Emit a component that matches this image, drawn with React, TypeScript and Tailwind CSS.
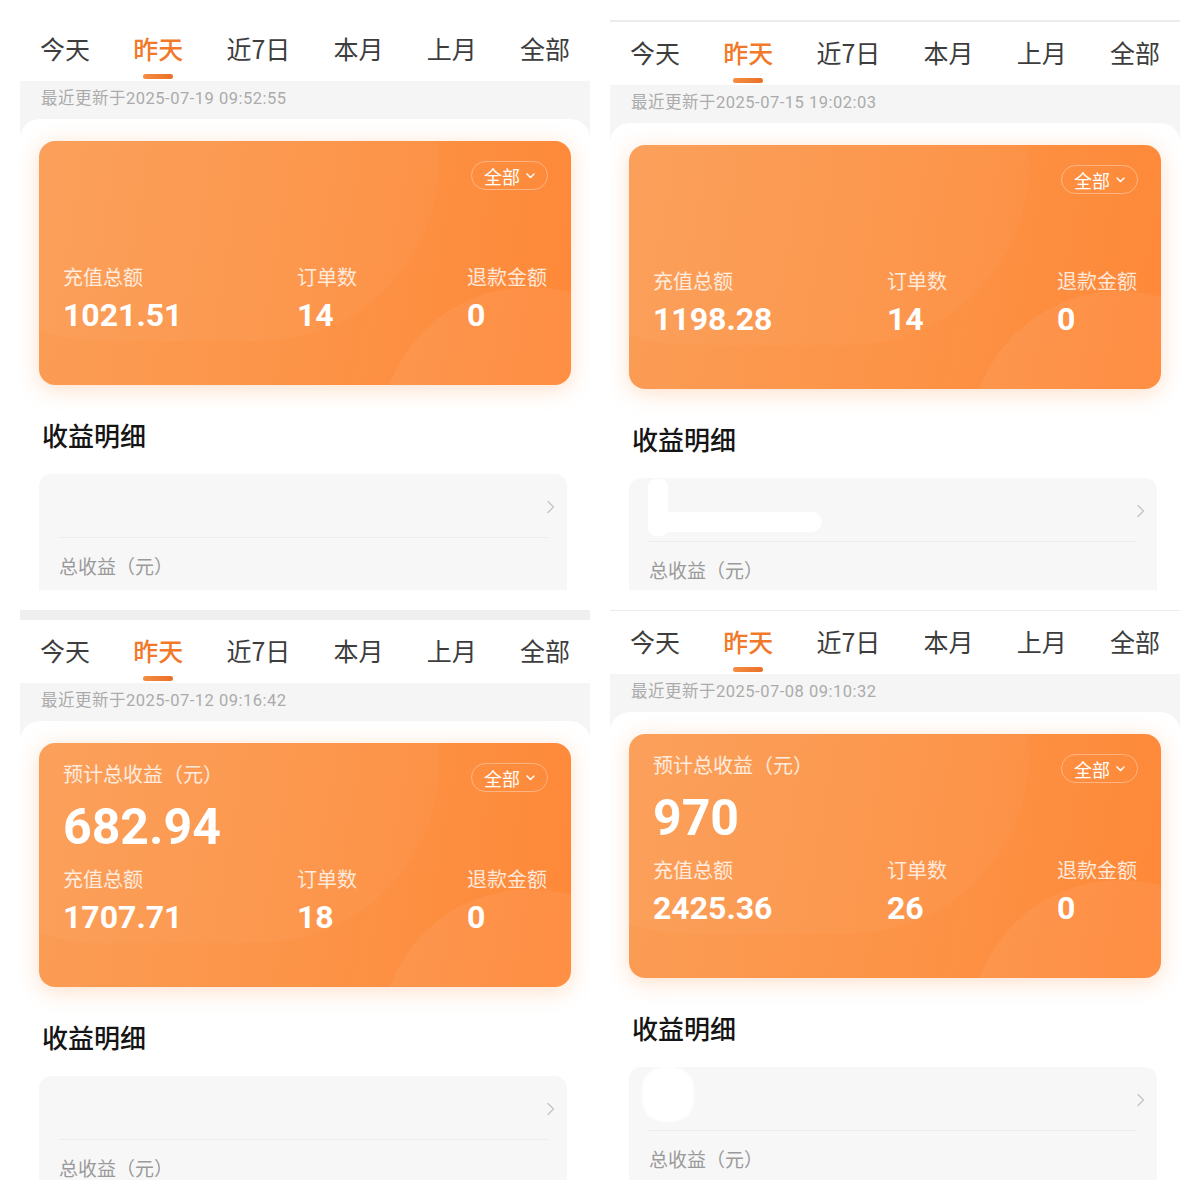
import React from "react";

type PanelData = {
  top: "space" | "line2" | "bar" | "line1";
  ts: string;
  est?: string;
  recharge: string;
  orders: string;
  refund: string;
  blot?: "a" | "b";
  h: string;
};

const panels: PanelData[] = [
  { top: "space", ts: "2025-07-19 09:52:55", recharge: "1021.51", orders: "14", refund: "0", h: "h-[590px]" },
  { top: "line2", ts: "2025-07-15 19:02:03", recharge: "1198.28", orders: "14", refund: "0", blot: "a", h: "h-[590px]" },
  { top: "bar", ts: "2025-07-12 09:16:42", est: "682.94", recharge: "1707.71", orders: "18", refund: "0", h: "h-[570px]" },
  { top: "line1", ts: "2025-07-08 09:10:32", est: "970", recharge: "2425.36", orders: "26", refund: "0", blot: "b", h: "h-[570px]" },
];

const CJK = "font-['Noto_Sans_CJK_SC','Noto_Sans',sans-serif]";
const NUM = "font-['Roboto','Noto_Sans_CJK_SC',sans-serif]";

const tabs = ["今天", "昨天", "近7日", "本月", "上月", "全部"];

function TopDecor({ top }: { top: PanelData["top"] }) {
  if (top === "space") return <div className="h-[18px]" />;
  if (top === "line2")
    return (
      <>
        <div className="h-[20px]" />
        <div className="h-[2px] bg-[#ececec]" />
      </>
    );
  if (top === "bar") return <div className="h-[10px] bg-[#efefef]" />;
  return <div className="h-px bg-[#ececec]" />;
}

function Tabs() {
  return (
    <div className={`relative flex h-[63px] items-start justify-between px-[20px] ${CJK}`}>
      {tabs.map((t, i) => (
        <div key={t} className="relative flex h-[63px] flex-col items-center">
          <span
            className={`mt-[16px] text-[25px] leading-[28px] ${
              i === 1 ? "font-medium text-[#f07a2a]" : "text-[#3d3d3d]"
            }`}
          >
            {t}
          </span>
          {i === 1 && (
            <div className="absolute top-[56px] h-[5px] w-[30px] rounded-full bg-[linear-gradient(90deg,#f48d43,#ea7026)]" />
          )}
        </div>
      ))}
    </div>
  );
}

function Chevron() {
  return (
    <svg width="10" height="14" viewBox="0 0 10 14" fill="none">
      <path d="M2 1.5l5.5 5.5L2 12.5" stroke="#c4c4c4" strokeWidth="1.3" strokeLinecap="round" strokeLinejoin="round" />
    </svg>
  );
}

function OrangeCard({ p }: { p: PanelData }) {
  return (
    <div className="relative h-[244px] overflow-hidden rounded-[16px] bg-[linear-gradient(100deg,#fb9d56_0%,#fc9448_50%,#fe8838_100%)] px-[24px] pt-[17px] shadow-[0_4px_22px_rgba(255,140,60,0.28)]">
      <div className="absolute left-[341px] top-[146px] h-[300px] w-[300px] rounded-full bg-white/[0.06]" />
      <div className="absolute -left-[120px] -top-[160px] h-[360px] w-[520px] rounded-full bg-white/[0.03]" />
      <div className="relative flex h-[28px] items-start justify-between">
        <span className={`text-[20px] leading-[28px] text-white/80 ${CJK}`}>
          {p.est ? "预计总收益（元）" : ""}
        </span>
        <div
          className={`mt-[3px] -mr-px flex h-[29px] w-[77px] items-center justify-center gap-[6px] rounded-full border border-white/35 ${CJK}`}
        >
          <span className="text-[18px] leading-none text-white">全部</span>
          <svg width="9" height="6" viewBox="0 0 9 6" fill="none">
            <path d="M1 1l3.5 3.5L8 1" stroke="#fff" strokeWidth="1.5" strokeLinecap="round" strokeLinejoin="round" />
          </svg>
        </div>
      </div>
      <div className={`relative mt-[11px] h-[56px] text-[50px] font-bold leading-[56px] text-white ${NUM}`}>
        {p.est ?? ""}
      </div>
      <div className="relative mt-[10px] grid grid-cols-[234px_1fr_auto]">
        {[
          ["充值总额", p.recharge],
          ["订单数", p.orders],
          ["退款金额", p.refund],
        ].map(([label, val]) => (
          <div key={label} className="flex flex-col">
            <span className={`text-[20px] leading-[28px] text-white/80 ${CJK}`}>{label}</span>
            <span className={`mt-[6px] text-[32px] font-bold leading-[36px] text-white ${NUM}`}>{val}</span>
          </div>
        ))}
      </div>
    </div>
  );
}

function DetailCard({ blot }: { blot?: "a" | "b" }) {
  return (
    <div className="relative mr-[4px] mt-[21px] h-[160px] rounded-[12px] bg-[#f7f7f7]">
      <div className="flex h-[63px] items-center justify-end pr-[11px] pt-[3px]">
        <Chevron />
      </div>
      <div className="mx-[20px] h-px bg-[#ebebeb]" />
      <div className={`flex h-[57px] items-center pl-[20px] text-[19px] text-[#9a9a9a] ${CJK}`}>
        总收益（元）
      </div>
      {blot === "a" && (
        <>
          <div className="absolute left-[19px] top-px h-[57px] w-[20px] rounded-[8px] bg-white" />
          <div className="absolute left-[19px] top-[34px] h-[20px] w-[174px] rounded-full bg-white" />
        </>
      )}
      {blot === "b" && (
        <div className="absolute left-[13px] top-0 h-[55px] w-[52px] rounded-[22px] bg-white blur-[1px]" />
      )}
    </div>
  );
}

function Panel({ p }: { p: PanelData }) {
  return (
    <div className={`${p.h} overflow-hidden bg-white`}>
      <TopDecor top={p.top} />
      <Tabs />
      <div className="bg-[#f5f5f5]">
        <div
          className={`h-[38px] pl-[21px] pt-[8px] text-[16.5px] leading-[20px] tracking-[0.5px] text-[#ababab] ${NUM}`}
        >
          最近更新于{p.ts}
        </div>
        <div className="rounded-t-[20px] bg-white px-[19px] pb-[40px] pt-[22px]">
          <OrangeCard p={p} />
          <div
            className={`mt-[32px] pl-[3px] text-[26px] font-medium leading-[36px] text-[#151515] ${CJK}`}
          >
            收益明细
          </div>
          <DetailCard blot={p.blot} />
        </div>
      </div>
    </div>
  );
}

export default function App() {
  return (
    <div className="h-[1200px] w-[1200px] overflow-hidden bg-white px-[20px]">
      <div className="grid grid-cols-[570px_570px] gap-x-[20px] gap-y-[20px]">
        {panels.map((p, i) => (
          <Panel key={i} p={p} />
        ))}
      </div>
    </div>
  );
}
